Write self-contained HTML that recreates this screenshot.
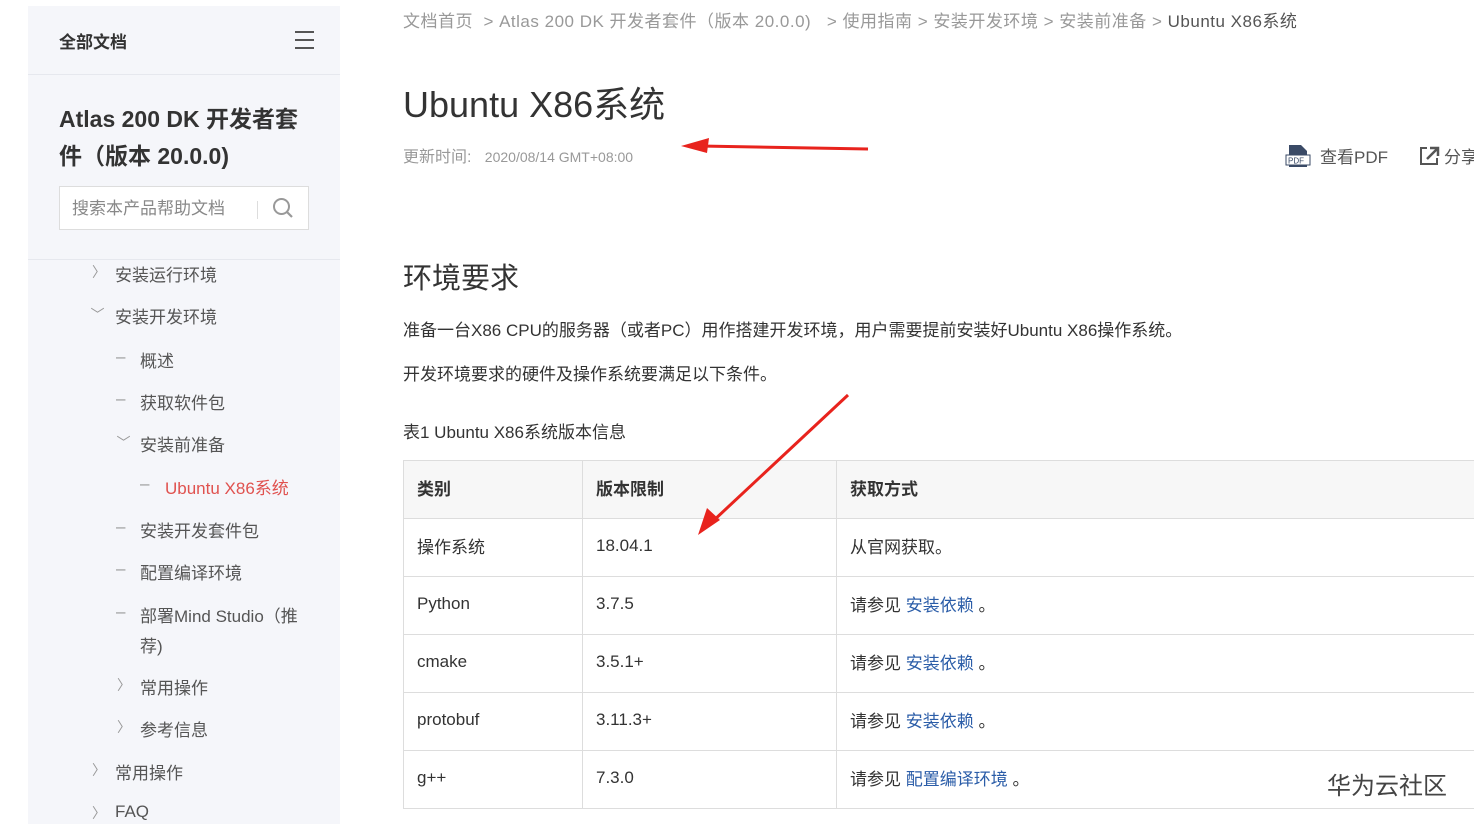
<!DOCTYPE html>
<html><head><meta charset="utf-8"><style>
*{margin:0;padding:0;box-sizing:border-box}
body{width:1474px;height:824px;overflow:hidden;background:#fff;font-family:"Liberation Sans","Noto Sans CJK SC",sans-serif;color:#333;position:relative}
.a{position:absolute;white-space:nowrap}
#side{position:absolute;left:28px;top:6px;width:312px;height:818px;background:#f5f6fa}
.nav{font-size:17px;color:#555}
.chev{color:#999;font-size:14px}
table{position:absolute;left:403px;top:460px;border-collapse:collapse;font-size:17px;color:#333;table-layout:fixed;width:1200px}
td{border:1px solid #ddd;height:58px;padding-left:13px;padding-bottom:4px}
tr.h td{background:#f7f7f7;font-weight:bold;height:58px}
.lk{color:#2b5da8}
</style></head><body>
<div id="side">
<div class="a" style="left:31px;top:22px;font-size:17px;font-weight:bold;color:#333">全部文档</div>
<div class="a" style="left:267px;top:25px;width:19px;height:2px;background:#555;box-shadow:0 8px 0 #555,0 16px 0 #555"></div>
<div class="a" style="left:0;top:68px;width:312px;height:1px;background:#e6e8ee"></div>
<div class="a" style="left:31px;top:95px;font-size:23px;font-weight:bold;color:#333;line-height:37px;white-space:normal;width:250px">Atlas 200 DK 开发者套件（版本 20.0.0)</div>
<div class="a" style="left:31px;top:180px;width:250px;height:44px;background:#fff;border:1px solid #ddd"></div>
<div class="a" style="left:44px;top:188px;font-size:17px;color:#888">搜索本产品帮助文档</div>
<div class="a" style="left:229px;top:195px;width:1px;height:18px;background:#ddd"></div>
<svg class="a" style="left:244px;top:191px" width="22" height="22"><circle cx="9.5" cy="9.5" r="7.5" stroke="#999" stroke-width="2" fill="none"/><path d="M15 15l5 5" stroke="#999" stroke-width="2.2"/></svg>
<div class="a" style="left:0;top:253px;width:312px;height:1px;background:#e6e8ee"></div>
</div>
<div class="a chev" style="left:92px;top:262px">&#x232A;</div><div class="a nav" style="left:115px;top:261px">安装运行环境</div>
<div class="a chev" style="left:90px;top:304px;transform:rotate(90deg)">&#x232A;</div><div class="a nav" style="left:115px;top:303px">安装开发环境</div>
<div class="a nav" style="left:116px;top:347px;color:#999">–</div><div class="a nav" style="left:140px;top:347px">概述</div>
<div class="a nav" style="left:116px;top:389px;color:#999">–</div><div class="a nav" style="left:140px;top:389px">获取软件包</div>
<div class="a chev" style="left:116px;top:432px;transform:rotate(90deg)">&#x232A;</div><div class="a nav" style="left:140px;top:431px">安装前准备</div>
<div class="a nav" style="left:140px;top:474px;color:#999">–</div><div class="a nav" style="left:165px;top:474px;color:#e0524f">Ubuntu X86系统</div>
<div class="a nav" style="left:116px;top:517px;color:#999">–</div><div class="a nav" style="left:140px;top:517px">安装开发套件包</div>
<div class="a nav" style="left:116px;top:559px;color:#999">–</div><div class="a nav" style="left:140px;top:559px">配置编译环境</div>
<div class="a nav" style="left:116px;top:602px;color:#999">–</div><div class="a nav" style="left:140px;top:602px">部署Mind Studio（推</div><div class="a nav" style="left:140px;top:632px">荐)</div>
<div class="a chev" style="left:117px;top:675px">&#x232A;</div><div class="a nav" style="left:140px;top:674px">常用操作</div>
<div class="a chev" style="left:117px;top:717px">&#x232A;</div><div class="a nav" style="left:140px;top:716px">参考信息</div>
<div class="a chev" style="left:92px;top:760px">&#x232A;</div><div class="a nav" style="left:115px;top:759px">常用操作</div>
<div class="a chev" style="left:92px;top:803px">&#x232A;</div><div class="a nav" style="left:115px;top:802px">FAQ</div>

<div class="a" style="left:403px;top:7px;font-size:17px;color:#999;letter-spacing:0.5px">文档首页 &nbsp;&gt; Atlas 200 DK 开发者套件（版本 20.0.0) &nbsp;&nbsp;&gt; 使用指南 &gt; 安装开发环境 &gt; 安装前准备 &gt; <span style="color:#555">Ubuntu X86系统</span></div>
<div class="a" style="left:403px;top:76px;font-size:36px;color:#333">Ubuntu X86系统</div>
<div class="a" style="left:403px;top:143px;font-size:16px;color:#999">更新时间: &nbsp;&nbsp;<span style="font-size:14px">2020/08/14 GMT+08:00</span></div>
<svg class="a" style="left:1285px;top:144px" width="26" height="24"><path d="M4 1h12l6 6v16H4z" fill="#3a4a66"/><rect x="1" y="11" width="24" height="10" fill="#fff" stroke="#3a4a66"/><text x="3" y="19.5" font-size="8" fill="#3a4a66" font-family="Liberation Sans">PDF</text></svg>
<div class="a" style="left:1320px;top:143px;font-size:17px;color:#555">查看PDF</div>
<svg class="a" style="left:1418px;top:145px" width="22" height="22"><path d="M9 3H3v16h16v-6" stroke="#555" stroke-width="2" fill="none"/><path d="M9 14l10-10M12 3h8v8" stroke="#555" stroke-width="2.5" fill="none"/></svg>
<div class="a" style="left:1444px;top:143px;font-size:17px;color:#555">分享</div>
<div class="a" style="left:403px;top:255px;font-size:29px;color:#333">环境要求</div>
<div class="a" style="left:403px;top:316px;font-size:17px">准备一台X86 CPU的服务器（或者PC）用作搭建开发环境，用户需要提前安装好Ubuntu X86操作系统。</div>
<div class="a" style="left:403px;top:360px;font-size:17px">开发环境要求的硬件及操作系统要满足以下条件。</div>
<div class="a" style="left:403px;top:418px;font-size:17px">表1 Ubuntu X86系统版本信息</div>
<table>
<tr class="h"><td style="width:179px">类别</td><td style="width:254px">版本限制</td><td>获取方式</td></tr>
<tr><td>操作系统</td><td>18.04.1</td><td>从官网获取。</td></tr>
<tr><td>Python</td><td>3.7.5</td><td>请参见 <span class="lk">安装依赖</span> 。</td></tr>
<tr><td>cmake</td><td>3.5.1+</td><td>请参见 <span class="lk">安装依赖</span> 。</td></tr>
<tr><td>protobuf</td><td>3.11.3+</td><td>请参见 <span class="lk">安装依赖</span> 。</td></tr>
<tr><td>g++</td><td>7.3.0</td><td>请参见 <span class="lk">配置编译环境</span> 。</td></tr>
</table>
<div class="a" style="left:1327px;top:766px;font-size:24px;color:#444">华为云社区</div>
<svg class="a" style="left:0;top:0" width="1474" height="824"><path d="M700 146L868 149" stroke="#e8231d" stroke-width="3"/><path d="M681 146l28-8-2 15z" fill="#e8231d"/><path d="M848 395L712 522" stroke="#e8231d" stroke-width="3"/><path d="M698 535l9-27 13 12z" fill="#e8231d"/></svg>
</body></html>
